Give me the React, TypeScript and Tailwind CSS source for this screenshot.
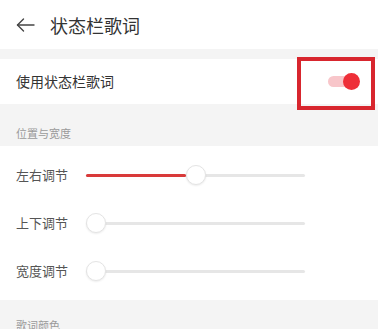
import React from "react";

const font = { fontFamily: '"Noto Sans CJK SC", "Noto Sans", sans-serif' };

function Slider({ value }: { value: number }) {
  // track width 219px, thumb 20px
  return (
    <div className="relative w-[219px] h-[20px] flex items-center">
      <div className="absolute left-0 right-0 h-[3px] rounded-full bg-[#e6e6e6]" />
      <div className="absolute left-0 h-[3px] rounded-full bg-[#d93a3a]" style={{ width: `${value}px` }} />
      <div
        className="absolute w-[20px] h-[20px] rounded-full bg-white border border-[#e4e4e4] shadow-[0_1px_2px_rgba(0,0,0,0.08)]"
        style={{ left: `${value}px` }}
      />
    </div>
  );
}

function SliderRow({ label, value }: { label: string; value: number }) {
  return (
    <div className="h-[48px] flex items-center pl-4">
      <div className="w-[70px] text-[13px] text-[#555]">{label}</div>
      <Slider value={value} />
    </div>
  );
}

export default function App() {
  return (
    <div className="relative w-[388px] h-[329px] bg-white overflow-hidden" style={font}>
      <div className="w-[378px]">
        <div className="h-[49px] flex items-center pl-4">
          <svg width="19" height="14" viewBox="0 0 19 14" fill="none" stroke="#444" strokeWidth="1.4" strokeLinecap="round" strokeLinejoin="round">
            <path d="M1.5 7H18" />
            <path d="M7.5 1L1.5 7L7.5 13" />
          </svg>
          <div className="ml-[15px] text-[18px] text-[#333] leading-none">状态栏歌词</div>
        </div>
        <div className="h-[10px] bg-[#f4f4f4]" />
        <div className="h-[45px] flex items-center justify-between pl-4 pr-[18px]">
          <div className="text-[14px] text-[#333]">使用状态栏歌词</div>
          <div className="relative w-[32px] h-[18px] flex items-center">
            <div className="absolute left-0 right-[6px] h-[11px] rounded-full bg-[#f8c6ca]" />
            <div className="absolute right-0 w-[17px] h-[17px] rounded-full bg-[#ee2f38]" />
          </div>
        </div>
        <div className="h-[42px] bg-[#f4f4f4] pl-4 pt-[21px]">
          <div className="text-[11px] leading-[16px] text-[#9a9a9a]">位置与宽度</div>
        </div>
        <div className="pt-[5px] pb-[5px]">
          <SliderRow label="左右调节" value={100} />
          <SliderRow label="上下调节" value={0} />
          <SliderRow label="宽度调节" value={0} />
        </div>
        <div className="h-[29px] bg-[#f4f4f4] pl-4 pt-[17px]">
          <div className="text-[11px] leading-[16px] text-[#9a9a9a]">歌词颜色</div>
        </div>
      </div>
      <div className="absolute left-[297px] top-[57px] w-[78px] h-[53px] border-[4px] border-[#d8262e]" />
    </div>
  );
}
